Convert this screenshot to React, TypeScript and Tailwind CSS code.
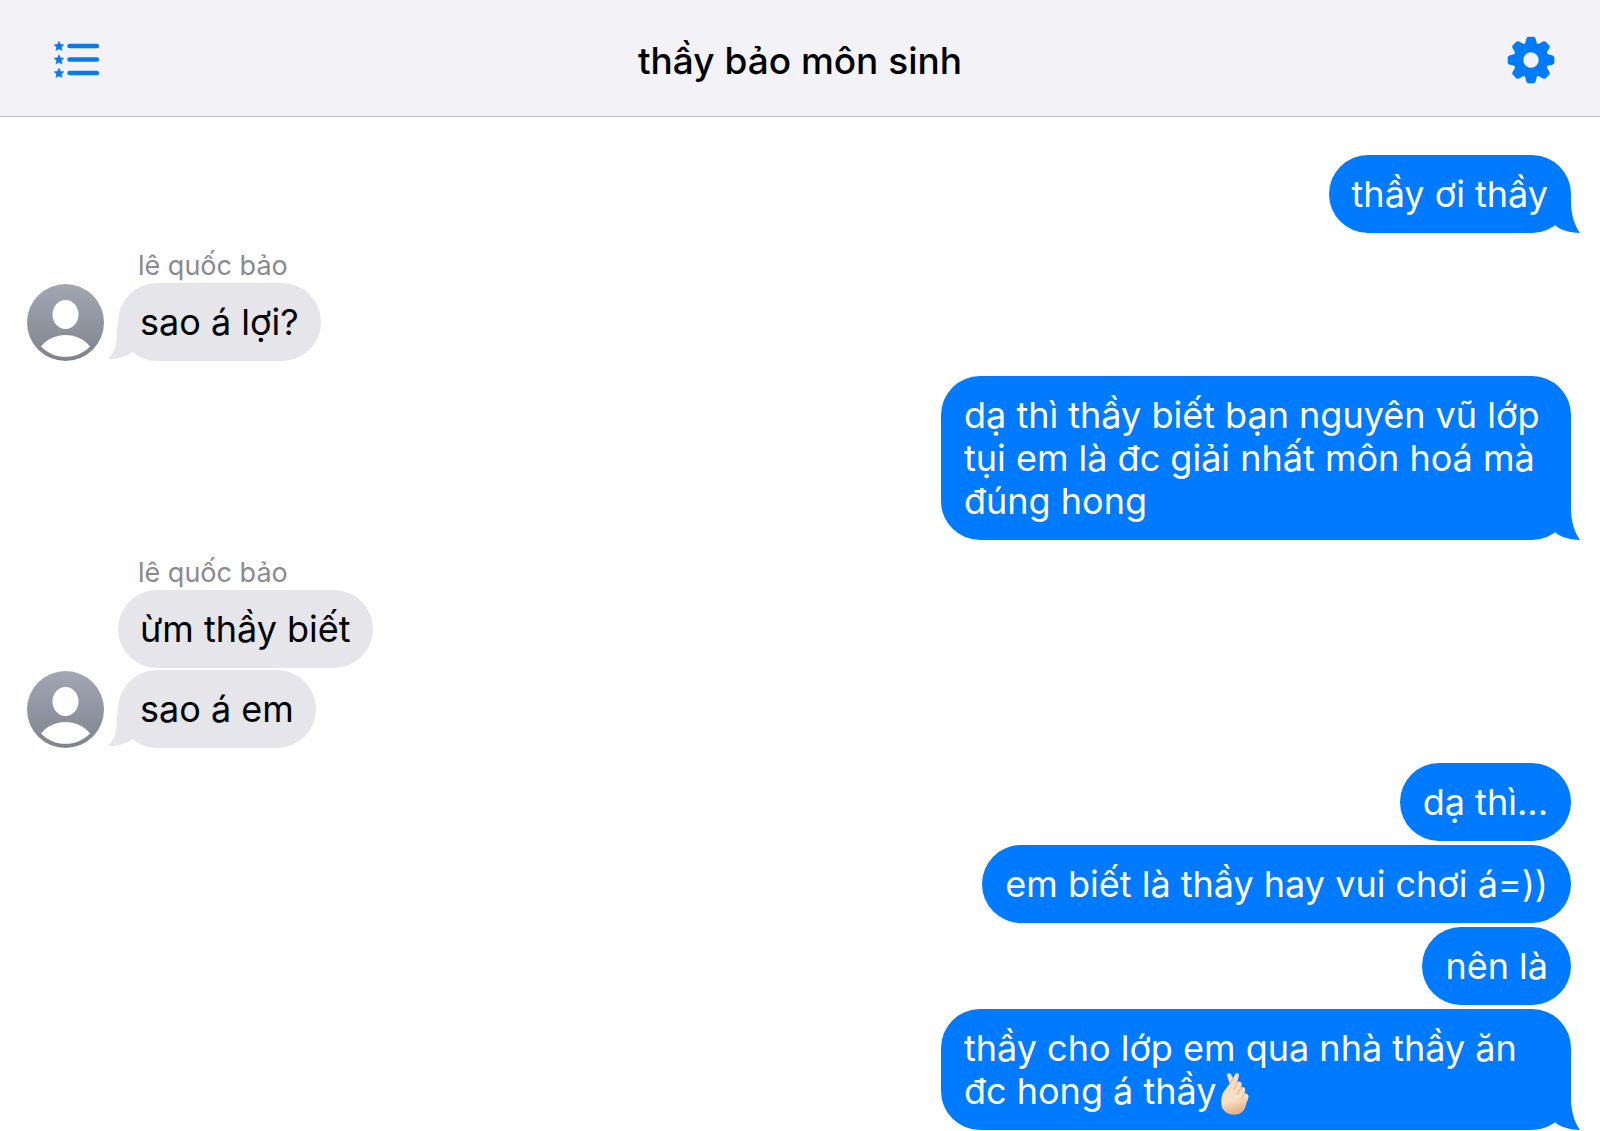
import { Fragment, ReactNode } from 'react';
import clsx from 'clsx';

type Group = {
  id: number;
  sender?: string;
  messages: ReactNode[];
};

function ListIcon() {
  const star = 'M5 0 L6.5 3.2 L10 3.7 L7.5 6.1 L8.1 9.6 L5 7.9 L1.9 9.6 L2.5 6.1 L0 3.7 L3.5 3.2 Z';

  return (
    <svg viewBox="0 0 48 40" className="w-12 h-10" fill="#0a7aeb" stroke="#0a7aeb">
      {[1, 14.5, 28].map((y) => (
        <Fragment key={y}>
          <path d={star} transform={`translate(1 ${y})`} strokeWidth="0.4" strokeLinejoin="round" />
          <path d={`M16.5 ${y + 5} H44`} strokeWidth="4.4" strokeLinecap="round" />
        </Fragment>
      ))}
    </svg>
  );
}

function GearIcon() {
  return (
    <svg viewBox="-24 -24 48 48" className="w-12 h-12" fill="#007aff">
      <circle r="12.2" fill="none" stroke="#007aff" strokeWidth="9" />
      {[0, 45, 90, 135, 180, 225, 270, 315].map((angle) => (
        <path
          key={angle}
          transform={`rotate(${angle})`}
          d="M-7.4 -14.5 Q-5.6 -16.5 -5.1 -19.5 Q-4.6 -23.3 -2.4 -23.3 H2.4 Q4.6 -23.3 5.1 -19.5 Q5.6 -16.5 7.4 -14.5 Z"
        />
      ))}
    </svg>
  );
}

function Avatar() {
  return (
    <svg viewBox="0 0 77 77" className="w-[77px] h-[77px] shrink-0" role="img" aria-label="lê quốc bảo">
      <defs>
        <linearGradient id="avatar" x1="0" y1="0" x2="0" y2="1">
          <stop offset="0" stopColor="#a3a7b5" />
          <stop offset="1" stopColor="#7f838c" />
        </linearGradient>
      </defs>
      <circle cx="38.5" cy="38.5" r="38.5" fill="url(#avatar)" />
      <ellipse cx="38.5" cy="30.5" rx="13" ry="14.5" fill="#fff" />
      <path d="M14 62.5 C20 55 29 51 38.5 51 C48 51 57 55 63 62.5 C56 69.5 48 72.8 38.5 72.8 C29 72.8 21 69.5 14 62.5 Z" fill="#fff" />
    </svg>
  );
}

function FingerHeart() {
  return (
    <svg viewBox="0 0 30 44" className="inline-block w-[30px] h-11 ml-1 -my-1 align-middle" role="img" aria-label="finger heart">
      <defs>
        <linearGradient id="skin" x1="0" y1="0" x2="0.2" y2="1">
          <stop offset="0" stopColor="#f9d9bd" />
          <stop offset="0.7" stopColor="#fce0c4" />
          <stop offset="1" stopColor="#e6b58e" />
        </linearGradient>
      </defs>
      <path
        d="M6.8 3.2 C7.4 0.8 10.4 0.6 11.4 3 L13.2 6 L15 2.4 C16.2 0 19.6 1 19 4 L17.2 10 C19.6 8.4 22.2 10 21.6 13.4 L21 15.4 C24 14.2 26 16.4 25 19.4 L24.4 21.6 C27 20.8 29 22.8 28.4 25.4 C27.8 29 26.2 30.6 25.8 33.4 C24.6 39.4 19.6 43 13.4 42.6 C7 42.2 2.2 38.6 1.4 32.4 C0.8 27 1.8 22 4.6 18.6 L9.8 11.6 Z"
        fill="url(#skin)"
      />
      <path
        d="M13.2 6 L10 11.8 M17.2 10 L14 17.6 M21 15.4 L17.6 22.4 M24.4 21.6 L21.4 27"
        fill="none"
        stroke="#dfae87"
        strokeWidth="1"
        strokeLinecap="round"
      />
    </svg>
  );
}

function Tail({ sent }: { sent: boolean }) {
  return sent ? (
    <svg viewBox="0 0 41 39" className="absolute bottom-0 -right-[9px] w-[41px] h-[39px]" fill="#007aff">
      <path d="M32 0 V8 C32 19 35 31 41 39 C33 38.6 23 37 17 32 L0 0 Z" />
    </svg>
  ) : (
    <svg viewBox="0 0 41 39" className="absolute bottom-0 -left-[10px] w-[41px] h-[39px]" fill="#e5e5ea">
      <path d="M10 0 L9 8 C9 21 8 29 0 37 C8 37.4 17 35 23 31 L41 0 Z" />
    </svg>
  );
}

function Bubble({ sent, tail, children }: { sent: boolean; tail: boolean; children: ReactNode }) {
  return (
    <div
      className={clsx(
        'relative max-w-[630px] rounded-[39px] pt-[18px] pb-[17px] text-[36px] leading-[43px]',
        sent ? 'bg-[#007aff] px-[23px] text-white' : 'bg-[#e5e5ea] px-[22px] text-black'
      )}
    >
      {tail && <Tail sent={sent} />}
      <p className="relative">{children}</p>
    </div>
  );
}

const groups: Group[] = [
  { id: 1, messages: ['thầy ơi thầy'] },
  { id: 2, sender: 'lê quốc bảo', messages: ['sao á lợi?'] },
  { id: 3, messages: ['dạ thì thầy biết bạn nguyên vũ lớp tụi em là đc giải nhất môn hoá mà đúng hong'] },
  { id: 4, sender: 'lê quốc bảo', messages: ['ừm thầy biết', 'sao á em'] },
  {
    id: 5,
    messages: [
      'dạ thì...',
      'em biết là thầy hay vui chơi á=))',
      'nên là',
      <>thầy cho lớp em qua nhà thầy ăn đc hong á thầy<FingerHeart /></>,
    ],
  },
];

function MessageGroup({ group }: { group: Group }) {
  const sent = !group.sender;
  const last = group.messages.length - 1;
  const bubbles = group.messages.map((message, i) => (
    <Bubble key={i} sent={sent} tail={i === last}>
      {message}
    </Bubble>
  ));

  if (sent) {
    return <li className="flex flex-col items-end gap-1">{bubbles}</li>;
  }

  return (
    <li className="flex items-end gap-[14px]">
      <Avatar />
      <div className="flex flex-col items-start">
        <span className="h-[35px] pl-5 text-[27px] leading-[35px] text-[#8a8a8e]">{group.sender}</span>
        <div className="flex flex-col items-start gap-0.5">{bubbles}</div>
      </div>
    </li>
  );
}

export default function App() {
  return (
    <div className="min-h-screen bg-white font-['Inter','Liberation_Sans',sans-serif]">
      <header className="flex h-[117px] items-center justify-between border-b border-[#bcbcc4] bg-[#f2f2f7] px-[45px] pt-1">
        <button aria-label="Messages" className="flex w-14 justify-end">
          <ListIcon />
        </button>
        <h1 className="text-[37px] leading-[43px] font-medium text-black">thầy bảo môn sinh</h1>
        <button aria-label="Settings" className="flex w-14 justify-end">
          <GearIcon />
        </button>
      </header>
      <ul className="flex flex-col gap-[15px] pt-[38px] pl-[27px] pr-[29px]">
        {groups.map((group) => (
          <MessageGroup key={group.id} group={group} />
        ))}
      </ul>
    </div>
  );
}
